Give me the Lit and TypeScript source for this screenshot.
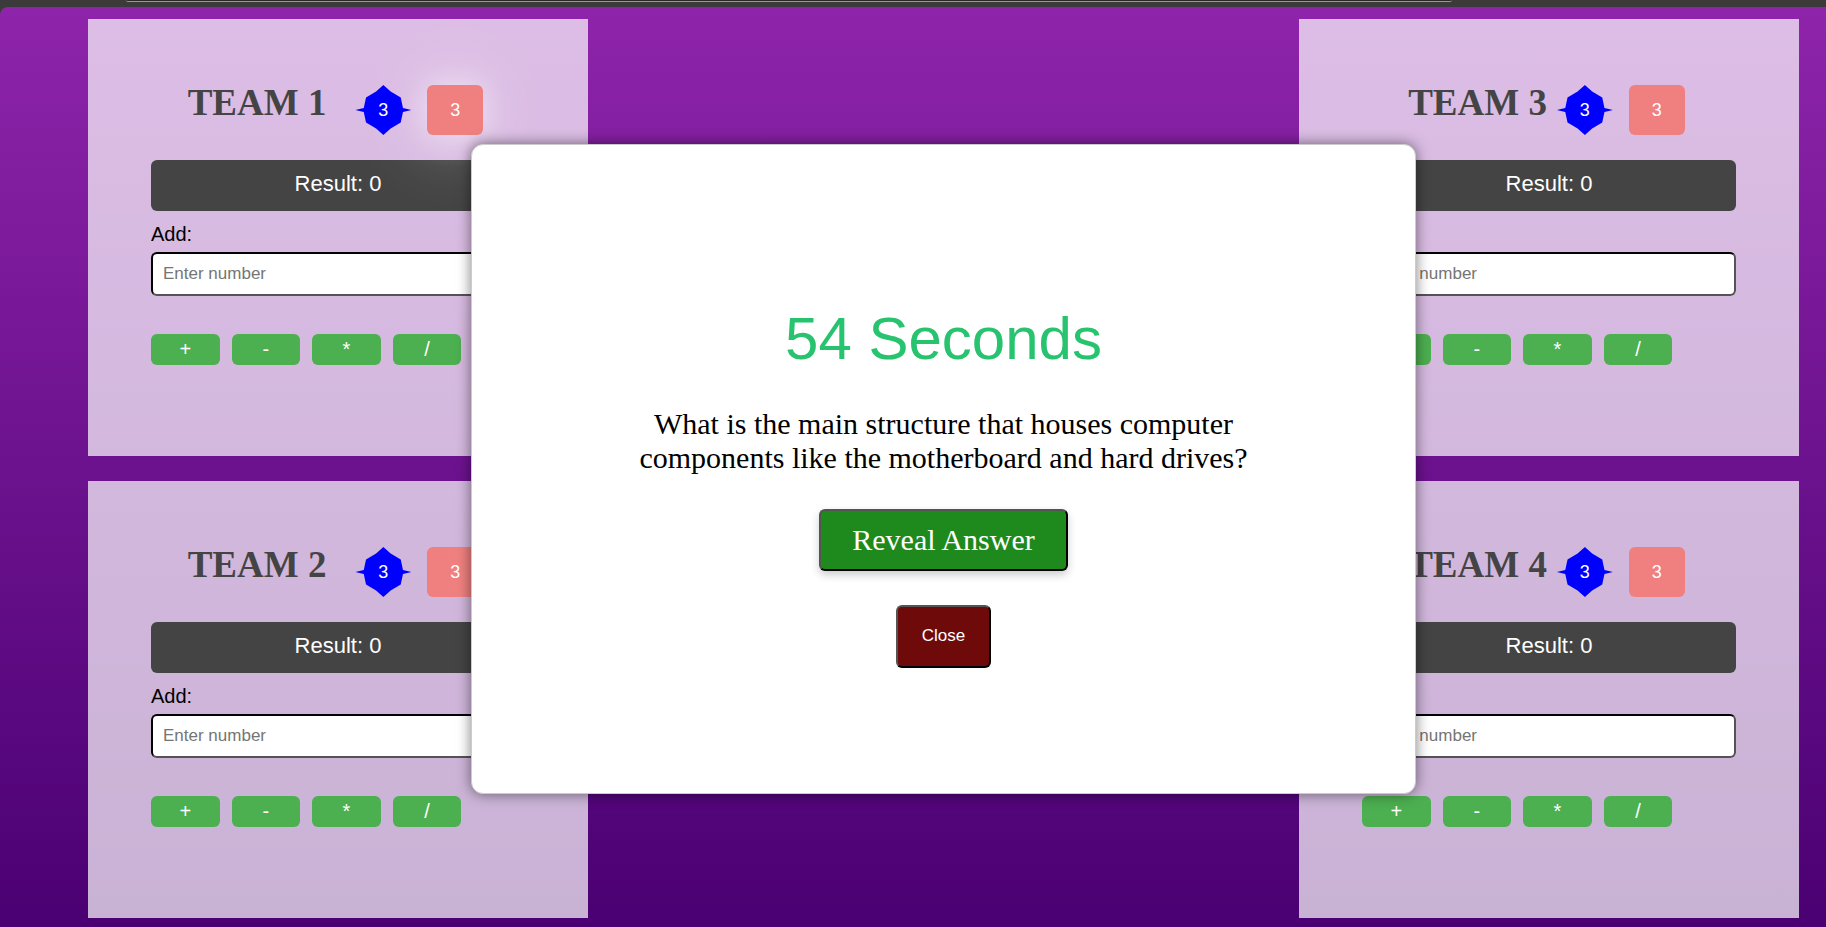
import { LitElement, html, css } from "lit";
import { customElement, property, state } from "lit/decorators.js";

@customElement("team-card")
class TeamCard extends LitElement {
  @property() name = "";
  @property({ type: Boolean, reflect: true }) spaced = false;
  @property({ type: Boolean, reflect: true }) glowing = false;
  @state() private result = 0;
  @state() private amount = "";

  static styles = css`
    :host {
      display: block;
      box-sizing: border-box;
      padding: 66px 63px 0;
      background: rgba(255, 255, 255, 0.7);
      font-family: Arial, "Liberation Sans", sans-serif;
    }
    .head {
      display: flex;
      justify-content: center;
      gap: 16px;
      margin-bottom: 25px;
      padding-right: 5px;
    }
    .title {
      margin: 0 -6px 0 0;
      font: bold 37px/36px "Times New Roman", "Liberation Serif", serif;
      color: #444;
    }
    :host([spaced]) .title {
      margin-right: 13px;
    }
    .power {
      position: relative;
      width: 56px;
      height: 50px;
      padding: 0;
      border: 0;
      font: 18px/48px Arial, "Liberation Sans", sans-serif;
      color: #fff;
    }
    .star {
      z-index: 1;
      background: blue;
      clip-path: polygon(
        50% 0, 63% 13%, 81% 25%, 85% 46%, 100% 50%, 85% 54%, 81% 75%, 63% 87%,
        50% 100%, 37% 87%, 19% 75%, 15% 54%, 0 50%, 15% 46%, 19% 25%, 37% 13%
      );
    }
    .tile {
      background: lightcoral;
      border-radius: 6px;
    }
    :host([glowing]) .tile {
      box-shadow:
        0 0 30px rgba(255, 255, 255, 0.5),
        0 0 70px rgba(255, 255, 255, 0.5);
    }
    .result {
      padding: 11px 0 14px;
      border-radius: 6px;
      background: #444;
      color: #fff;
      font-size: 22px;
      line-height: 26px;
      text-align: center;
    }
    .label {
      display: block;
      margin: 11px 0 6px;
      font-size: 20px;
      line-height: 24px;
    }
    .field {
      display: block;
      box-sizing: border-box;
      width: 100%;
      height: 44px;
      padding: 0 10px;
      border: 2px inset #000;
      border-radius: 6px;
      background: #fff;
      font: 17px/20px Arial, "Liberation Sans", sans-serif;
    }
    .field::placeholder {
      color: #757575;
    }
    .ops {
      display: grid;
      grid-template-columns: repeat(4, 1fr);
      gap: 12px;
      width: 83%;
      margin-top: 38px;
    }
    .op {
      height: 31px;
      padding: 0;
      border: 0;
      border-radius: 6px;
      background: #4caf50;
      color: #fff;
      font: 20px/31px Arial, "Liberation Sans", sans-serif;
    }
  `;

  private apply(op: string) {
    const n = Number(this.amount);
    if (op === "+") this.result += n;
    else if (op === "-") this.result -= n;
    else if (op === "*") this.result *= n;
    else if (n !== 0) this.result /= n;
  }

  render() {
    return html`
      <div class="head">
        <h2 class="title">${this.name}</h2>
        <button class="power star">3</button>
        <button class="power tile">3</button>
      </div>
      <div class="result">Result: ${this.result}</div>
      <label class="label" for="amount">Add:</label>
      <input
        class="field"
        id="amount"
        placeholder="Enter number"
        .value=${this.amount}
        @input=${(e: Event) => (this.amount = (e.target as HTMLInputElement).value)}
      />
      <div class="ops">
        ${["+", "-", "*", "/"].map(
          (op) => html`<button class="op" @click=${() => this.apply(op)}>${op}</button>`
        )}
      </div>
    `;
  }
}

@customElement("question-dialog")
class QuestionDialog extends LitElement {
  @property({ type: Number }) seconds = 0;
  @property() question = "";

  static styles = css`
    :host {
      display: flex;
      flex-direction: column;
      align-items: center;
      box-sizing: border-box;
      width: 945px;
      max-width: 100%;
      padding: 160px 150px 125px;
      border: 1px solid #ccc;
      border-radius: 12px;
      background: #fff;
      box-shadow: 0 0 14px rgba(0, 0, 0, 0.5);
    }
    .timer {
      font: 60px/68px Arial, "Liberation Sans", sans-serif;
      color: #28c36f;
    }
    .question {
      margin: 34px 0;
      font: 30px/34px "Times New Roman", "Liberation Serif", serif;
      text-align: center;
      color: #000;
    }
    .reveal {
      padding: 13px 31px;
      border: 2px outset #000;
      border-radius: 6px;
      background: #1e8a1e;
      color: #fff;
      font: 30px/32px "Times New Roman", "Liberation Serif", serif;
      box-shadow: 0 4px 8px rgba(0, 0, 0, 0.2);
    }
    .close {
      margin-top: 34px;
      padding: 19px 24px 20px;
      border: 2px outset #000;
      border-radius: 6px;
      background: #6e0a0a;
      color: #fff;
      font: 17px/20px Arial, "Liberation Sans", sans-serif;
    }
  `;

  render() {
    return html`
      <div class="timer" role="timer">${this.seconds} Seconds</div>
      <p class="question">${this.question}</p>
      <button class="reveal">Reveal Answer</button>
      <button class="close">Close</button>
    `;
  }
}

@customElement("app-root")
class AppRoot extends LitElement {
  static styles = css`
    :host {
      display: flex;
      flex-direction: column;
      min-height: 100vh;
      background: #3b3b3b;
    }
    .toolbar {
      height: 7px;
      padding: 0 374px 0 126px;
      overflow: hidden;
    }
    .address {
      height: 2px;
      box-sizing: border-box;
      border-bottom: 1px solid #999;
      border-radius: 0 0 8px 8px;
      background: #282828;
    }
    .stage {
      position: relative;
      flex: 1;
      display: grid;
      grid-template-columns: 500px 500px;
      grid-template-rows: 1fr 1fr;
      grid-auto-flow: column;
      justify-content: space-between;
      gap: 25px;
      padding: 12px 27px 9px 88px;
      border-top-left-radius: 8px;
      background: linear-gradient(#8e24aa, #4a0072);
    }
    .overlay {
      position: absolute;
      inset: 0;
      display: grid;
      place-items: center;
      padding: 4px 27px 0 88px;
    }
  `;

  render() {
    return html`
      <div class="toolbar"><div class="address"></div></div>
      <main class="stage">
        <team-card name="TEAM 1" spaced glowing></team-card>
        <team-card name="TEAM 2" spaced></team-card>
        <team-card name="TEAM 3"></team-card>
        <team-card name="TEAM 4"></team-card>
        <div class="overlay">
          <question-dialog
            role="dialog"
            aria-modal="true"
            .seconds=${54}
            question="What is the main structure that houses computer components like the motherboard and hard drives?"
          ></question-dialog>
        </div>
      </main>
    `;
  }
}
